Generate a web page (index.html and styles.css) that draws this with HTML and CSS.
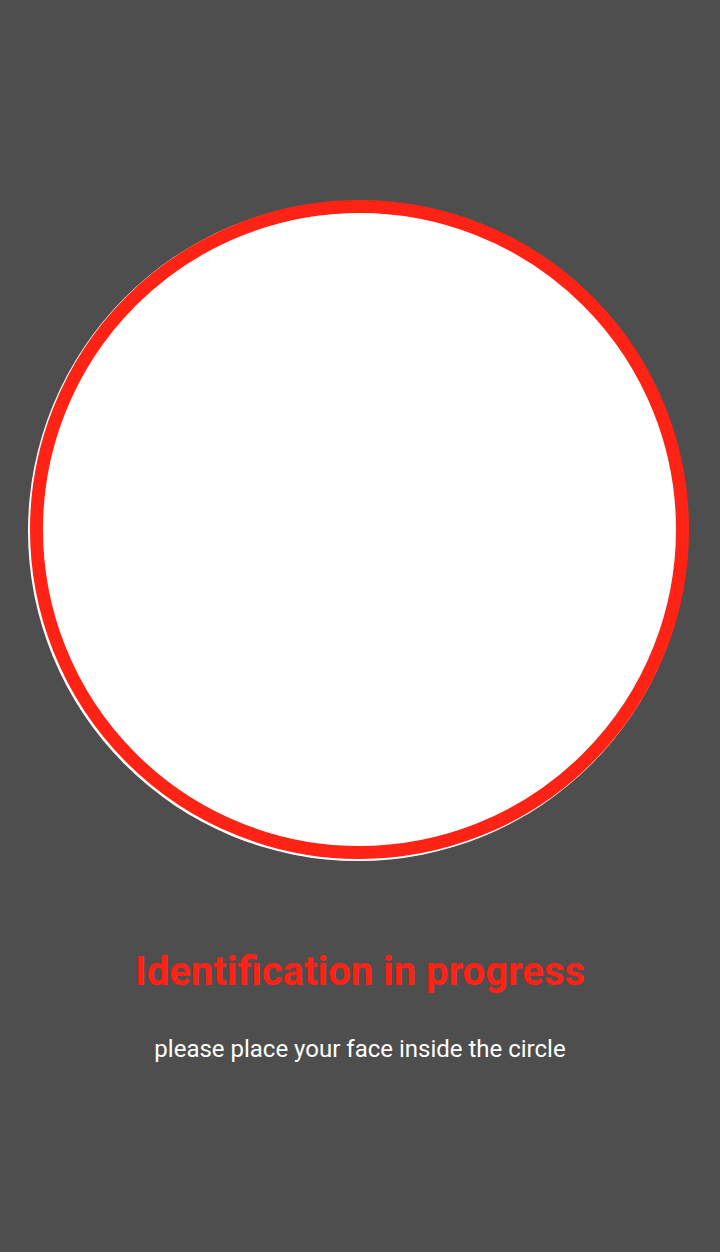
FILE: index.html
```html
<!DOCTYPE html>
<html>
<head>
<meta charset="utf-8">
<link rel="stylesheet" href="styles.css">
</head>
<body>
<main class="screen">
  <div class="camera">
    <div class="face-disc"></div>
    <div class="ring"></div>
  </div>
  <h1 class="title">Identification in progress</h1>
  <p class="hint">please place your face inside the circle</p>
</main>
</body>
</html>
```
FILE: styles.css
```css
html, body {
  margin: 0;
  padding: 0;
  background: #4e4e4e;
}
.screen {
  width: 720px;
  height: 1252px;
  display: flex;
  flex-direction: column;
  align-items: center;
  padding-top: 200px;
  box-sizing: border-box;
  font-family: Roboto, "Liberation Sans", sans-serif;
}
.camera {
  position: relative;
  width: 662px;
  height: 661px;
  margin-left: -2px;
}
.face-disc {
  position: absolute;
  left: 0;
  top: 1px;
  width: 660px;
  height: 660px;
  border-radius: 50%;
  background: #ffffff;
}
.ring {
  position: absolute;
  left: 2px;
  top: 0;
  width: 659px;
  height: 659px;
  box-sizing: border-box;
  border-radius: 50%;
  border: 13px solid #ff2316;
}
.title {
  margin: 87px 0 0;
  font-size: 40px;
  font-weight: 700;
  color: #ff2316;
  line-height: 48px;
}
.hint {
  margin: 39px 0 0;
  font-size: 24px;
  color: #ffffff;
  line-height: 28px;
}
```
